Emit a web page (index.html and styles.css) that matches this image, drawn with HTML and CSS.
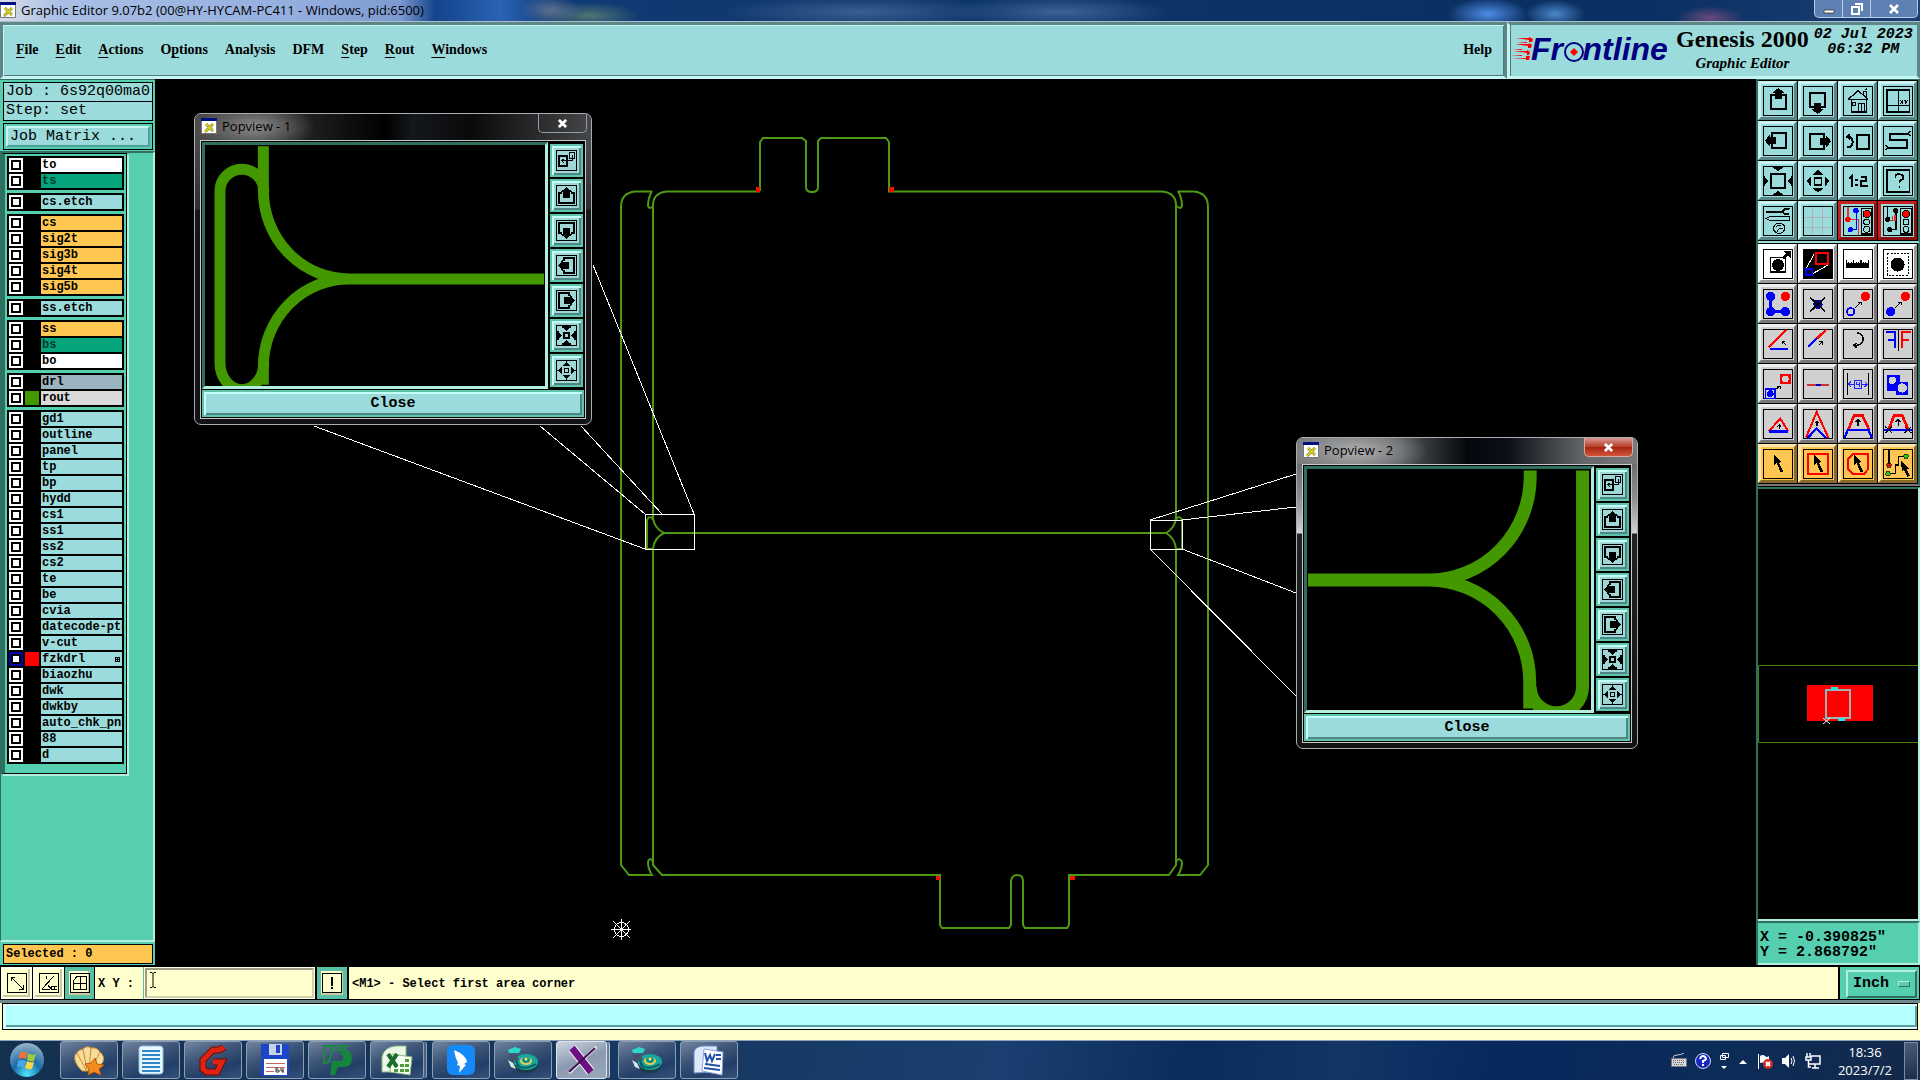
FILE: index.html
```html
<!DOCTYPE html>
<html lang="en">
<head>
<meta charset="utf-8">
<title>Graphic Editor</title>
<link rel="stylesheet" href="styles.css">
</head>
<body>
<svg class="defs" aria-hidden="true">
  <symbol id="app" viewBox="0 0 16 16"><path fill="#fff" stroke="#777" d="M.5.5h15v15H.5z"/><path fill="#001080" d="M0 0h16v3H0z"/><path stroke="#6a6a10" stroke-width="2.500" d="M5 6l7 7M12 6l-8 8"/><path stroke="#e6e020" stroke-width="1.500" d="M5 6l7 7M12 6l-8 8"/></symbol>
  <symbol id="frame" viewBox="0 0 90 90"><path fill="none" stroke="#000" stroke-width="3" d="M1.500 1.500h87v87h-87z"/></symbol>
  <symbol id="pan" viewBox="0 0 90 90"><use href="#frame"/><path fill="none" stroke="#000" stroke-width="6" d="M24 28h45v41H24z"/><path d="M46 6L64 20H56V38H36V20H28z"/></symbol>
  <symbol id="minipan" viewBox="0 0 60 60"><path fill="none" stroke="#000" stroke-width="3" d="M1.500 1.500h57v57h-57z"/><path fill="none" stroke="#000" stroke-width="6" d="M9 24h42v27H9z"/><path fill="#9ddcdc" d="M18 18h24v12H18z"/><path d="M30 6L46 19H39V36H21V19H14z"/></symbol>
  <symbol id="zoomin" viewBox="0 0 60 60"><path fill="none" stroke="#000" stroke-width="3" d="M1.500 1.500h57v57h-57z"/><path fill="none" stroke="#000" stroke-width="4" d="M23 23h14v14H23z"/><path d="M30 16L16 6V3h28v3zM30 44L16 54v3h28v-3zM16 30L6 16H3v28h3zM44 30L54 16h3v28h-3z"/></symbol>
  <symbol id="zoomout" viewBox="0 0 60 60"><path fill="none" stroke="#000" stroke-width="3" d="M1.500 1.500h57v57h-57zM24 24h12v12H24z"/><path d="M30 4L41 17H19zM30 56L41 43H19zM4 30L17 19v22zM56 30L43 19v22z"/></symbol>
  <symbol id="link" viewBox="0 0 60 60"><path fill="none" stroke="#000" stroke-width="3" d="M1.500 1.500h57v57h-57zM39 8h15v15H39zM46 15v16H17M23 25l-7 6 7 6"/><path fill="none" stroke="#000" stroke-width="5" d="M8 18h24v27H8z"/></symbol>
  <symbol id="cursor" viewBox="0 0 90 90"><path d="M33 16L57 39l-9 2 12 26-7 3-12-27-8 7z"/></symbol>
  <symbol id="snail" viewBox="0 0 34 28"><ellipse cx="20" cy="19" rx="12" ry="8" fill="#1c3b4a"/><ellipse cx="20" cy="16" rx="12" ry="8" fill="#16a79e"/><path fill="none" stroke="#0b5f60" stroke-width="2" d="M10 19q8 6 20-1M11 12q-2 5 3 9"/><ellipse cx="20" cy="15" rx="6" ry="4" fill="#e3d05a"/><ellipse cx="20" cy="14" rx="4" ry="3" fill="#0d8d84"/><circle cx="20" cy="13" r="1.500" fill="#f2e87c"/><path fill="#2fd6cb" d="M2 4l7-3 6 2-2 4H3z"/><path fill="#46506a" d="M3 8l8 1 2 5-6 1z"/><path fill="#dce6e6" d="M2 14l5 3 3 6-5-2z"/></symbol>
</svg>

<header class="titlebar">
  <svg class="app-icon"><use href="#app"/></svg>
  <span>Graphic Editor 9.07b2 (00@HY-HYCAM-PC411 - Windows, pid:6500)</span>
  <div class="winbtns">
    <button aria-label="Minimize"><svg viewBox="0 0 14 12"><path fill="#fff" stroke="#333" stroke-width=".8" d="M2 7h10v3H2z"/></svg></button>
    <button aria-label="Restore"><svg viewBox="0 0 14 12"><path fill="none" stroke="#fff" stroke-width="2" d="M5 1h7v7M2 4h7v7H2z"/></svg></button>
    <button class="wide" aria-label="Close"><svg viewBox="0 0 14 12"><path fill="none" stroke="#fff" stroke-width="2.500" d="M3 2l8 8M11 2l-8 8"/></svg></button>
  </div>
</header>

<div class="topbar">
  <nav class="menus">
    <button><u>F</u>ile</button><button><u>E</u>dit</button><button><u>A</u>ctions</button><button>O<u>p</u>tions</button><button>Analysis</button><button>DFM</button><button><u>S</u>tep</button><button><u>R</u>out</button><button><u>W</u>indows</button><button class="help">Help</button>
  </nav>
  <div class="brand">
    <svg class="logo" viewBox="0 -6 162 44"><path fill="#f00" d="M5 4h13V3l4 2-1 3h-3V6zM4 10h14V9l3 2-1 3h-3v-2zM3 17h13v-1l3 2-1 3h-2v-2zM1 24h14v-2h4l-1 4h-3v-1zM1 15h10v1zM0 21h11v1zM6 8h10v1z"/><text class="logo-text" x="20" y="26">Fr<tspan fill="none">o</tspan>ntline</text><circle cx="63" cy="18" r="9" fill="none" stroke="#000080" stroke-width="2"/><path fill="#f00" d="M63 14l4 4-4 4-4-4z"/></svg>
    <div class="product"><strong>Genesis 2000</strong><em>Graphic Editor</em></div>
    <div class="date"><span>02 Jul 2023</span><span>06:32 PM</span></div>
  </div>
</div>

<main class="work">
  <aside class="left">
    <div class="jobinfo"><div>Job : 6s92q00ma0</div><div>Step: set</div></div>
    <div class="matrix"><button>Job Matrix ...</button></div>
    <div class="layers-wrap">
      <div class="layers">
        <div class="group">
          <label class="row white"><input type="checkbox"><i></i><span>to</span></label>
          <label class="row mask"><input type="checkbox"><i></i><span>ts</span></label>
        </div>
        <div class="group"><label class="row"><input type="checkbox"><i></i><span>cs.etch</span></label></div>
        <div class="group">
          <label class="row signal"><input type="checkbox"><i></i><span>cs</span></label>
          <label class="row signal"><input type="checkbox"><i></i><span>sig2t</span></label>
          <label class="row signal"><input type="checkbox"><i></i><span>sig3b</span></label>
          <label class="row signal"><input type="checkbox"><i></i><span>sig4t</span></label>
          <label class="row signal"><input type="checkbox"><i></i><span>sig5b</span></label>
        </div>
        <div class="group"><label class="row"><input type="checkbox"><i></i><span>ss.etch</span></label></div>
        <div class="group">
          <label class="row signal"><input type="checkbox"><i></i><span>ss</span></label>
          <label class="row mask"><input type="checkbox"><i></i><span>bs</span></label>
          <label class="row white"><input type="checkbox"><i></i><span>bo</span></label>
        </div>
        <div class="group">
          <label class="row drill"><input type="checkbox"><i></i><span>drl</span></label>
          <label class="row rout"><input type="checkbox"><i class="green"></i><span>rout</span></label>
        </div>
        <div class="group">
          <label class="row"><input type="checkbox"><i></i><span>gd1</span></label>
          <label class="row"><input type="checkbox"><i></i><span>outline</span></label>
          <label class="row"><input type="checkbox"><i></i><span>panel</span></label>
          <label class="row"><input type="checkbox"><i></i><span>tp</span></label>
          <label class="row"><input type="checkbox"><i></i><span>bp</span></label>
          <label class="row"><input type="checkbox"><i></i><span>hydd</span></label>
          <label class="row"><input type="checkbox"><i></i><span>cs1</span></label>
          <label class="row"><input type="checkbox"><i></i><span>ss1</span></label>
          <label class="row"><input type="checkbox"><i></i><span>ss2</span></label>
          <label class="row"><input type="checkbox"><i></i><span>cs2</span></label>
          <label class="row"><input type="checkbox"><i></i><span>te</span></label>
          <label class="row"><input type="checkbox"><i></i><span>be</span></label>
          <label class="row"><input type="checkbox"><i></i><span>cvia</span></label>
          <label class="row"><input type="checkbox"><i></i><span>datecode-pte</span></label>
          <label class="row"><input type="checkbox"><i></i><span>v-cut</span></label>
          <label class="row"><input type="checkbox" checked><i class="red"></i><span>fzkdrl</span><svg class="mark" viewBox="0 0 5 5"><path fill="none" stroke="#000" d="M.5.5h4v4h-4zM2.500 0v5M0 2.500h5"/></svg></label>
          <label class="row"><input type="checkbox"><i></i><span>biaozhu</span></label>
          <label class="row"><input type="checkbox"><i></i><span>dwk</span></label>
          <label class="row"><input type="checkbox"><i></i><span>dwkby</span></label>
          <label class="row"><input type="checkbox"><i></i><span>auto_chk_pnl</span></label>
          <label class="row"><input type="checkbox"><i></i><span>88</span></label>
          <label class="row"><input type="checkbox"><i></i><span>d</span></label>
        </div>
      </div>
    </div>
    <div class="selected"><div>Selected : 0</div></div>
  </aside>

  <section class="canvas">
    <svg class="board" width="1601" height="888" viewBox="155 79 1601 888">
      <g fill="none" stroke="#4f9a14" stroke-width="2">
        <path d="M652 191.500H635Q621 193 621 207V865L629 875H652Q648 869 648 862Q650 856 653 862"/>
        <path d="M652 191Q648 198 648 206Q650 210 653 206"/>
        <path d="M1178 191.500H1194Q1208 193 1208 207V865L1200 875H1178Q1182 869 1182 862Q1179 856 1176 862"/>
        <path d="M1178 191Q1182 198 1182 206Q1180 210 1177 206"/>
        <path d="M760 191.500H667Q653 193 653 205V518Q654 528 664 533Q654 538 653 549V865L662 875H940V925L942 928H1009L1011 925V881Q1012 875 1017 875Q1023 875 1023 881V925L1025 928H1067L1069 925V875H1169L1176 865V549Q1175 538 1166 533Q1175 528 1176 518V205Q1176 193 1162 191.500H889V142L886 138H821L818 141V187Q818 192 812 192Q806 192 806 187V141L802 138H763L760 142V191"/>
        <path d="M662 533H1168"/>
        <path d="M653 520Q650 514 647 520V549H653M1176 520Q1179 514 1182 520V549H1176"/>
      </g>
      <path fill="#f21200" d="M756 187h4v5h-4zM889 187h5v5h-5zM936 876h4v4h-4zM1070 876h5v4h-5z"/>
      <g class="crisp" fill="none" stroke="#fff">
        <path d="M645.500 514.500h49v35h-49zM1150.500 520.500h32v29h-32z"/>
        <path d="M593 265L694 514M540 426L645 514M581 426L662 514M314 426L645 549M1150 520L1296 474M1182 520L1296 507M1182 549L1296 593M1150 549L1296 696"/>
        <path d="M611 929.500h20M621.500 919v21M613 921l17 17M630 921l-17 17"/><circle cx="621.500" cy="929.500" r="7"/>
      </g>
    </svg>

    <section class="pop pop1">
      <header><svg class="app-icon"><use href="#app"/></svg><span>Popview - 1</span><button class="popx" aria-label="Close window"><svg viewBox="0 0 10 10"><path stroke="#fff" stroke-width="3" d="M1 1l8 8M9 1l-8 8"/></svg></button></header>
      <div class="client">
        <div class="view"><svg width="341" height="241" viewBox="204 145 341 241"><path fill="none" stroke="#439800" stroke-width="11" d="M262.500 146V190A86 89 0 0 0 350 279H544M350 279A86 88 0 0 0 262.500 367V385M219 363V191A22 22 0 0 1 263 191M219 363A22 27 0 0 0 263 363"/></svg></div>
        <div class="poptools">
          <button aria-label="Link"><svg><use href="#link"/></svg></button><button aria-label="Pan up"><svg><use href="#minipan"/></svg></button><button aria-label="Pan down"><svg class="r180"><use href="#minipan"/></svg></button><button aria-label="Pan left"><svg class="r270"><use href="#minipan"/></svg></button><button aria-label="Pan right"><svg class="r90"><use href="#minipan"/></svg></button><button aria-label="Zoom in"><svg><use href="#zoomin"/></svg></button><button aria-label="Zoom out"><svg><use href="#zoomout"/></svg></button>
        </div>
        <div class="popclose"><button>Close</button></div>
      </div>
    </section>

    <section class="pop pop2">
      <header><svg class="app-icon"><use href="#app"/></svg><span>Popview - 2</span><button class="popx" aria-label="Close window"><svg viewBox="0 0 10 10"><path stroke="#fff" stroke-width="3" d="M1 1l8 8M9 1l-8 8"/></svg></button></header>
      <div class="client">
        <div class="view"><svg width="285" height="241" viewBox="1306 469 285 241"><path fill="none" stroke="#439800" stroke-width="13" d="M1307 580H1428A102 104 0 0 0 1530 476V470M1428 580A102 102 0 0 1 1529.500 682V709M1582.500 470V687A26 26 0 0 1 1530 687"/></svg></div>
        <div class="poptools">
          <button aria-label="Link"><svg><use href="#link"/></svg></button><button aria-label="Pan up"><svg><use href="#minipan"/></svg></button><button aria-label="Pan down"><svg class="r180"><use href="#minipan"/></svg></button><button aria-label="Pan left"><svg class="r270"><use href="#minipan"/></svg></button><button aria-label="Pan right"><svg class="r90"><use href="#minipan"/></svg></button><button aria-label="Zoom in"><svg><use href="#zoomin"/></svg></button><button aria-label="Zoom out"><svg><use href="#zoomout"/></svg></button>
        </div>
        <div class="popclose"><button>Close</button></div>
      </div>
    </section>
  </section>

  <aside class="right">
    <div class="tools">
      <button aria-label="Pan up"><svg><use href="#pan"/></svg></button>
      <button aria-label="Pan down"><svg class="r180"><use href="#pan"/></svg></button>
      <button aria-label="Home"><svg viewBox="0 0 90 90"><use href="#frame"/><g fill="none" stroke="#000" stroke-width="4"><path d="M16 40L45 14L76 40M25 38v40h46V38M19 40h55"/><path stroke-width="3" d="M29 50h9v9h-9zM47 78V51h17v27M56 51v27M62 28V15h8v18M72 8l-5 5"/></g></svg></button>
      <button aria-label="Coordinates"><svg viewBox="0 0 90 90"><use href="#frame"/><path fill="none" stroke="#000" stroke-width="5" d="M11 11h68v67H11z"/><path fill="none" stroke="#000" stroke-width="3" d="M47 11v67M11 59h68M52 43l8 10M60 43l-8 10M65 43l5 5M74 43l-8 10"/></svg></button>
      <button aria-label="Pan left"><svg class="r270"><use href="#pan"/></svg></button>
      <button aria-label="Pan right"><svg class="r90"><use href="#pan"/></svg></button>
      <button aria-label="Previous view"><svg viewBox="0 0 90 90"><use href="#frame"/><g fill="none" stroke="#000" stroke-width="6"><path d="M43 28h34v40H43zM13 63h8q8-4 8-15t-9-15"/></g><path d="M7 32l15-11v22z"/></svg></button>
      <button aria-label="Serpentine"><svg viewBox="0 0 90 90"><use href="#frame"/><path fill="none" stroke="#000" stroke-width="5" d="M76 23H20v19h52v23H15"/><path fill="none" stroke="#000" stroke-width="3" d="M83 15l-8 8 8 8M7 57l8 8-8 8"/></svg></button>
      <button aria-label="Zoom in"><svg viewBox="0 0 90 90"><use href="#frame"/><path fill="none" stroke="#000" stroke-width="5" d="M24 24h42v42H24z"/><path d="M28 3h34L45 15zM28 87h34L45 75zM3 29v32l12-16zM87 29v32L75 45z"/></svg></button>
      <button aria-label="Zoom out"><svg viewBox="0 0 90 90"><use href="#frame"/><path fill="none" stroke="#000" stroke-width="5" d="M34 35h21v22H34z"/><path d="M45 12l17 14H28zM45 80l17-14H28zM11 46l14-16v32zM79 46L65 30v32z"/></svg></button>
      <button aria-label="Zoom one to two"><svg viewBox="0 0 90 90"><use href="#frame"/><path fill="none" stroke="#000" stroke-width="6" d="M18 38l9-8v34M53 32h17v14H55v15h19"/><path d="M37 38h7v7h-7zM37 54h7v7h-7z"/></svg></button>
      <button aria-label="Query"><svg viewBox="0 0 90 90"><use href="#frame"/><path fill="none" stroke="#000" stroke-width="5" d="M11 11h68v67H11zM37 35v-7q10-8 23 1v10q-11 4-11 13M49 60v7"/></svg></button>
      <button aria-label="Settings"><svg viewBox="0 0 90 90"><use href="#frame"/><path fill="none" stroke="#000" stroke-width="6" d="M10 17h50M79 10q-17-4-19 7 2 12 19 7"/><path fill="none" stroke="#000" stroke-width="3" d="M9 37l10-5h60v10H19zM35 76q-8-7 0-18t26-2q9 8 0 21-14 11-26-1zM40 63q8-10 13-3M44 78q0-12 16-10"/></svg></button>
      <button aria-label="Grid"><svg viewBox="0 0 90 90"><use href="#frame"/><path fill="none" stroke="#b9a0a6" stroke-width="2" d="M28 3v84M59 3v84M3 33h84M3 63h84"/></svg></button>
      <button class="alert" aria-label="Online check"><svg viewBox="0 0 90 90"><path fill="none" stroke="#000" stroke-width="4" d="M2 2v86h86V2zM56 8h30v76H56z"/><g fill="none" stroke-width="4"><path stroke="#d33" d="M15 2v38h32v46"/><path stroke="#00f" d="M40 15v55H22"/></g><g fill="#00f"><circle cx="39" cy="14" r="8"/><circle cx="22" cy="71" r="8"/></g><circle cx="15" cy="40" r="8" fill="red"/><g fill="none" stroke="#000" stroke-width="3"><circle cx="71" cy="24" r="11" fill="#f00"/><circle cx="71" cy="48" r="9"/><circle cx="71" cy="70" r="9"/></g></svg></button>
      <button class="alert" aria-label="Net check"><svg viewBox="0 0 90 90"><path fill="none" stroke="#000" stroke-width="4" d="M2 2v86h86V2zM52 8h34v76H52zM14 2v38M39 15v55H19"/><path stroke="#d33" stroke-width="4" fill="none" d="M19 44h17V28M28 42V30M20 42V32"/><g><circle cx="38" cy="14" r="8"/><circle cx="14" cy="40" r="8"/><circle cx="20" cy="71" r="8"/></g><g fill="none" stroke="#000" stroke-width="3"><circle cx="69" cy="24" r="11" fill="#f00"/><circle cx="69" cy="48" r="9"/><circle cx="69" cy="70" r="9"/></g></svg></button>
    </div>
    <div class="tools edit">
      <button class="plain" aria-label="Move feature"><svg viewBox="0 0 90 90"><use href="#frame"/><path fill="none" stroke="#000" stroke-width="4" d="M23 25h44v44H23z"/><circle cx="45" cy="48" r="18"/><path stroke="#000" stroke-width="9" d="M60 28l14-12"/><path d="M61 6h23v23z"/></svg></button>
      <button class="plain" aria-label="Zoom feature"><svg viewBox="0 0 90 90"><path d="M0 0h90v90H0z"/><path fill="none" stroke="#fff" stroke-width="3" d="M10 57L33 16M29 74l50-28"/><path fill="none" stroke="red" stroke-width="6" d="M40 12h36v34H40z"/><path fill="none" stroke="#00f" stroke-width="6" d="M9 60h19v18H9z"/></svg></button>
      <button class="plain" aria-label="Ruler"><svg viewBox="0 0 90 90"><use href="#frame"/><path d="M8 56V33h4v9h4v-3h3v3h4v-3h3v3h4v-9h4v9h4v-3h3v3h4v-3h3v3h4v-9h4v9h4v-3h3v3h4v-3h3v3h4v-9h4v23z"/></svg></button>
      <button class="plain" aria-label="Select feature"><svg viewBox="0 0 90 90"><use href="#frame"/><path fill="none" stroke="#000" stroke-width="3" stroke-dasharray="6 4" d="M13 13h63v65H13z"/><circle cx="44" cy="47" r="21"/></svg></button>
      <button aria-label="Connect"><svg viewBox="0 0 90 90"><use href="#frame"/><path fill="none" stroke="#00f" stroke-width="8" d="M23 22v46h44"/><g fill="#00f"><circle cx="23" cy="22" r="14"/><circle cx="23" cy="68" r="14"/><circle cx="67" cy="68" r="14"/></g><circle cx="67" cy="22" r="14" fill="red"/></svg></button>
      <button aria-label="Delete"><svg viewBox="0 0 90 90"><use href="#frame"/><circle cx="45" cy="46" r="14" fill="#000090"/><path stroke="#000" stroke-width="5" d="M21 25l46 43M67 25L21 68"/></svg></button>
      <button aria-label="Move"><svg viewBox="0 0 90 90"><use href="#frame"/><circle cx="67" cy="22" r="14" fill="red"/><circle cx="23" cy="68" r="11" fill="none" stroke="#00f" stroke-width="5"/><path fill="none" stroke="#000" stroke-width="3" d="M37 56l17-17M44 39h10v10"/></svg></button>
      <button aria-label="Copy"><svg viewBox="0 0 90 90"><use href="#frame"/><circle cx="67" cy="22" r="14" fill="red"/><circle cx="23" cy="68" r="14" fill="#00f"/><path fill="none" stroke="#000" stroke-width="3" d="M37 56l17-17M44 39h10v10"/></svg></button>
      <button aria-label="Rotate line"><svg viewBox="0 0 90 90"><use href="#frame"/><path stroke="red" stroke-width="7" d="M17 54l53-51"/><path stroke="#00f" stroke-width="7" d="M20 60h56"/><path fill="none" stroke="#000" stroke-width="3" d="M68 47L58 36M57 45v-9h9"/></svg></button>
      <button aria-label="Extend line"><svg viewBox="0 0 90 90"><use href="#frame"/><path stroke="red" stroke-width="7" d="M42 28L69 3"/><path stroke="#00f" stroke-width="7" d="M15 53l27-25"/><path fill="none" stroke="#000" stroke-width="3" d="M47 49l10-10M49 38h9v9"/></svg></button>
      <button aria-label="Rotate"><svg viewBox="0 0 90 90"><use href="#frame"/><path fill="none" stroke="#000" stroke-width="5" d="M42 11q18 3 18 19T42 49h-9M41 42l-9 7 9 7"/></svg></button>
      <button aria-label="Mirror"><svg viewBox="0 0 90 90"><use href="#frame"/><path stroke="#000" stroke-width="3" d="M46 0v66"/><path fill="none" stroke="#00f" stroke-width="6" d="M9 8h28v48M37 32H14"/><path fill="none" stroke="red" stroke-width="6" d="M83 8H56v48M56 32h22"/></svg></button>
      <button aria-label="Move to layer"><svg viewBox="0 0 90 90"><use href="#frame"/><path fill="none" stroke="#00f" stroke-width="4" d="M8 60h28v28H8z"/><circle cx="22" cy="74" r="10" fill="#00f"/><path fill="red" d="M51 14h32v32H51z"/><circle cx="67" cy="30" r="10" fill="#d0d0d0"/><path fill="none" stroke="#000" stroke-width="3" d="M41 60l9-9M43 51h8v8"/></svg></button>
      <button aria-label="Stretch"><svg viewBox="0 0 90 90"><use href="#frame"/><path stroke="#c33" stroke-width="8" stroke-linecap="round" d="M16 48h58"/><path stroke="#00c" stroke-width="6" d="M38 48h16"/></svg></button>
      <button aria-label="Spacing"><svg viewBox="0 0 90 90"><use href="#frame"/><path stroke="#000" stroke-width="3" d="M13 13v66M76 13v66"/><path fill="none" stroke="#22f" stroke-width="3" d="M33 34h22v24H33zM39 39v8h9M48 39v15M16 46h17M24 38l-8 8 8 8M55 46h18M65 38l8 8-8 8"/></svg></button>
      <button aria-label="Merge"><svg viewBox="0 0 90 90"><use href="#frame"/><path fill="#00f" d="M12 18h40v20h24v40H38V66H12z"/><circle cx="28" cy="34" r="11" fill="#d0d0d0"/><circle cx="58" cy="57" r="14" fill="#d0d0d0"/></svg></button>
      <button aria-label="Triangle edge"><svg viewBox="0 0 90 90"><use href="#frame"/><path fill="none" stroke="red" stroke-width="6" d="M17 67l35-38 24 38"/><path stroke="#00f" stroke-width="8" d="M17 67h58"/><path fill="none" stroke="#000" stroke-width="3" d="M49 60V48M43 53l6-6 6 6"/></svg></button>
      <button aria-label="Peak edge"><svg viewBox="0 0 90 90"><use href="#frame"/><path fill="none" stroke="red" stroke-width="6" d="M9 86L41 9l35 77"/><path fill="none" stroke="#00f" stroke-width="7" d="M14 87l27-29 28 29"/><path fill="none" stroke="#000" stroke-width="4" d="M42 50V36M35 43l7-7 7 7"/></svg></button>
      <button aria-label="Trapeze edge"><svg viewBox="0 0 90 90"><use href="#frame"/><path fill="none" stroke="red" stroke-width="8" d="M17 60l16-40h26l18 40"/><path fill="none" stroke="#00f" stroke-width="7" d="M4 87l11-25h61l11 25"/><path fill="none" stroke="#000" stroke-width="4" d="M45 50V33M38 39l7-7 7 7"/></svg></button>
      <button aria-label="Trim edge"><svg viewBox="0 0 90 90"><use href="#frame"/><path fill="none" stroke="red" stroke-width="8" d="M18 60l15-40h25l17 40"/><path stroke="#00f" stroke-width="7" d="M2 62h86"/><path fill="none" stroke="#000" stroke-width="3" d="M7 53l20 19M27 53L7 72M65 53l20 19M85 53L65 72M45 50V33M38 39l7-7 7 7"/></svg></button>
      <button class="pick" aria-label="Select"><svg viewBox="0 0 90 90"><use href="#frame"/><use href="#cursor"/></svg></button>
      <button class="pick" aria-label="Select in frame"><svg viewBox="0 0 90 90"><use href="#frame"/><path fill="none" stroke="red" stroke-width="6" d="M14 14h62v62H14z"/><use href="#cursor"/></svg></button>
      <button class="pick" aria-label="Select in polygon"><svg viewBox="0 0 90 90"><use href="#frame"/><path fill="none" stroke="red" stroke-width="6" d="M30 14h46v46L62 76H30L14 60V30z"/><use href="#cursor"/></svg></button>
      <button class="pick" aria-label="Select net"><svg viewBox="0 0 90 90"><use href="#frame"/><path fill="none" stroke="#000" stroke-width="4" d="M18 2v46M16 74h21V48h9V23h23"/><circle cx="18" cy="49" r="7" fill="#d01818" stroke="#000" stroke-width="2"/><circle cx="69" cy="22" r="7" fill="#2c2" stroke="#000" stroke-width="2"/><circle cx="15" cy="74" r="7" fill="#2c2" stroke="#000" stroke-width="2"/><path d="M55 36l24 22-9 2 10 20-7 3-10-21-7 7z"/></svg></button>
    </div>
    <div class="overview">
      <svg width="160" height="80" viewBox="0 0 160 80"><path fill="none" stroke="#3f8012" d="M.5 1.500h162v77H.5z"/><path fill="red" d="M49 21h66v36H49z"/><path fill="none" stroke="#a6b0b0" stroke-width="2" d="M68 26h24v28H68z"/><path stroke="#22e4ea" stroke-width="3" d="M73 24.500h7M80 55.500h7"/><path stroke="#22e4ea" stroke-width="2" d="M68 26v3M68 52v3"/><path stroke="#fff" d="M65 54l7 6M72 54l-7 6"/></svg>
    </div>
    <div class="coords"><span>X = -0.390825"</span><span>Y = 2.868792"</span></div>
  </aside>
</main>

<footer class="status">
  <button class="mode" aria-label="Absolute"><svg viewBox="0 0 20 20"><path fill="none" stroke="#000" d="M.5.5h19v19H.5zM4 4l12 12M4 8V4h4M16 12v4h-4"/></svg></button>
  <button class="mode" aria-label="Angle"><svg viewBox="0 0 20 20"><path fill="none" stroke="#000" d="M.5.5h19v19H.5zM3 16L15 3M3 16h8M7 3v3M9 12l3 4M12 13h3v3h-3zM16 13h2M16 16h2"/></svg></button>
  <button class="mode on" aria-label="Snap grid"><svg viewBox="0 0 20 20"><path fill="none" stroke="#000" d="M.5.5h19v19H.5zM7 3.500h9.500v13H3.500v-9zM10.500 3v14M3 10.500h14"/></svg></button>
  <label class="xy" for="xy">X Y :</label>
  <div class="xyfield"><input id="xy" type="text"><svg class="caret" viewBox="0 0 6 16"><path fill="none" stroke="#000" d="M0 .5h2l1 1 1-1h2M3 1v14M0 15.500h2l1-1 1 1h2"/></svg></div>
  <button class="mode on bang" aria-label="Apply"><svg viewBox="0 0 20 20"><path fill="none" stroke="#000" d="M.5.5h19v19H.5z"/><path d="M9 4h2v9H9zM9 14h2v2H9z"/></svg></button>
  <div class="message">&lt;M1&gt; - Select first area corner</div>
  <div class="unit"><select aria-label="Units"><option>Inch</option></select><i></i></div>
</footer>
<div class="strip"><div></div></div>

<div class="taskbar">
  <button class="start" aria-label="Start"><svg viewBox="0 0 38 38"><defs><radialGradient id="orb" cx=".5" cy=".9" r=".9"><stop offset="0" stop-color="#4fe6ff"/><stop offset=".45" stop-color="#1b6ca8"/><stop offset="1" stop-color="#9db6c8"/></radialGradient></defs><circle cx="19" cy="19" r="17.500" fill="url(#orb)" stroke="#0c2c50"/><path fill="#f0703a" d="M12 12q4-3 7 0l-1 6q-4-2-8 0z"/><path fill="#9ccb3c" d="M20 12q4 3 8 1l-2 7q-4 1-7-1z"/><path fill="#4aa8e8" d="M10 20q4-2 8 0l-2 7q-4-3-7-1z"/><path fill="#fbd24a" d="M19 20q3 2 7 1l-2 7q-4 1-7-1z"/></svg></button>
  <button aria-label="Shell"><svg viewBox="0 0 34 32"><path fill="#f7dc9a" stroke="#c98a35" d="M3 11Q7 5 11 5q4-4 8-1 6-1 9 4 5 4 3 10l-8 9H10Q1 18 3 11z"/><path fill="none" stroke="#c98a35" d="M14 26L5 9M15 26L11 5M17 26l2-22M19 26l9-18"/><path fill="#f58a1f" stroke="#b85a0c" d="M23 14l2 6 7 1-5 4 2 6-7-3-6 3 1-6-4-5 6-1z"/></svg></button>
  <button aria-label="Notes"><svg viewBox="0 0 34 32"><rect x="5" y="2" width="24" height="28" rx="3" fill="#e8f6ff" stroke="#8fc1e2"/><path stroke="#2e86c4" stroke-width="2" d="M8 7h18M8 11h18M8 15h18M8 19h18M8 23h18M8 27h18"/></svg></button>
  <button aria-label="CAM"><svg viewBox="0 0 34 32"><path fill="none" stroke="#6a0d06" stroke-width="7" d="M28 3Q24 7 17 6L7 16v9l4 3h10l5-10h-9"/><path fill="none" stroke="#dd2414" stroke-width="5" d="M28 3Q24 7 17 6L7 16v9l4 3h10l5-10h-9"/></svg></button>
  <button aria-label="Disk tool"><svg viewBox="0 0 34 32"><path fill="#1d45c8" d="M3 0h27l1 2v30H3z"/><path fill="#c9d3e6" d="M11 0h13v11H11z"/><path fill="#1d45c8" d="M18 1h4v8h-4z"/><path fill="#fff" d="M6 15h23v16H6z"/><path stroke="#c86464" d="M8 19.500h19M8 23.500h19M8 27.500h8"/><path fill="none" stroke="#333" d="M20 24h-2v4h3v-2h-3M23 24v3h3M25 24v5"/></svg></button>
  <button aria-label="Plotter"><svg viewBox="0 0 34 32"><path fill="none" stroke="#1a8a42" stroke-width="2" d="M4 19V2h23l-3 4H12L9 18z"/><path fill="#14853c" d="M10 31l2-14h8q3 0 3-4t-4-4l3-3h5q5 2 5 8 0 9-9 9h-5l-3 8z"/></svg></button>
  <button class="stack" aria-label="Excel"><svg viewBox="0 0 34 32"><path fill="#eef6ea" stroke="#86b97a" d="M2 13Q4 3 16 2h10v26H2z"/><path fill="#f8fff5" stroke="#86b97a" d="M12 10l20 3-2 18-20-3z"/><path fill="#4f9b3f" d="M20 20h4v3h-4zM25 20h4v3h-4zM20 25h4v3h-4zM25 25h4v3h-4zM14 25h4v3h-4zM25 15h4v3h-4z"/><path stroke="#1c6b2a" stroke-width="4" d="M8 10l9 13M17 10L8 23"/></svg></button>
  <button aria-label="Messenger"><svg viewBox="0 0 34 32"><rect x="3" y="1" width="28" height="30" rx="6" fill="#1489f7"/><path fill="#fff" d="M10 6q12 5 13 12l-3 2 2 1-7 8 1-7-3-1 1-2q-3-6-4-13z"/></svg></button>
  <button aria-label="Job manager"><svg viewBox="0 0 34 28"><use href="#snail"/></svg></button>
  <button class="active" aria-label="X server"><svg viewBox="0 0 34 32"><path stroke="#fff" stroke-width="9" d="M7 4l19 24"/><path stroke="#fff" stroke-width="3" d="M31 3L4 29"/><path stroke="#6b1180" stroke-width="7" d="M7 4l19 24"/><path stroke="#3a1050" stroke-width="2" d="M30 4L4 28"/></svg></button>
  <button aria-label="Job manager 2"><svg viewBox="0 0 34 28"><use href="#snail"/></svg></button>
  <button aria-label="Word"><svg viewBox="0 0 34 32"><path fill="#dce8f8" stroke="#6a8cc8" d="M2 29V8Q3 3 10 2h15v26z"/><path fill="#fff" stroke="#8aa6d6" d="M12 5l19 3-1 23-20-4z"/><path fill="none" stroke="#2450a8" stroke-width="2" d="M13 9l2 8 3-6 2 6 3-7M24 11h5M24 15h5M13 20l15 2M12 24l16 2"/></svg></button>

  <div class="tray">
    <svg width="18" height="16" viewBox="0 0 18 16"><path fill="none" stroke="#ccc" d="M3 5q0-3 4-3t7-2"/><path fill="#d8d8d8" stroke="#777" d="M1.500 5.500h15v8h-15z"/><path stroke="#666" stroke-dasharray="1 1" d="M3 7.500h12M3 9.500h12M4 11.500h10"/></svg>
    <svg width="18" height="18" viewBox="0 0 18 18"><circle cx="9" cy="9" r="7.500" fill="#1728c0" stroke="#cfd6f6"/><path fill="none" stroke="#fff" stroke-width="2" d="M6 7q1-3 3-3t3 2.500Q12 8 9 9v2M9 12v2"/></svg>
    <svg width="12" height="20" viewBox="0 0 12 20"><path fill="none" stroke="#fff" d="M4.500 2.500h6v4h-6zM2.500 4.500h5v4h-5z"/><path fill="#fff" d="M3 15h6l-3 3z"/></svg>
    <svg width="14" height="16" viewBox="0 0 14 16"><path fill="#fff" d="M3 11h8L7 7z"/></svg>
    <svg width="18" height="18" viewBox="0 0 18 18"><path fill="#fff" d="M2 2h1v15H2zM4 4q3-2 5 0t4 0v7q-3 1-5 0t-4 0z"/><circle cx="12" cy="12" r="5" fill="#d02a24"/><path stroke="#fff" stroke-width="2" d="M10 10l4 4M14 10l-4 4"/></svg>
    <svg width="18" height="18" viewBox="0 0 18 18"><path fill="#fff" d="M2 6h3l4-4v14l-4-4H2z"/><path fill="none" stroke="#fff" d="M11 6q2 3 0 6M13 4q3 5 0 10"/></svg>
    <svg width="18" height="18" viewBox="0 0 18 18"><path fill="none" stroke="#fff" stroke-width="1.500" d="M7 4h9v8H5M8 16h7M11 12v4M3 1v4M6 1v4M2 5h5v3H2zM4.500 8v7H7"/></svg>
    <div class="clock"><span>18:36</span><span>2023/7/2</span></div>
    <button class="desktop" aria-label="Show desktop"></button>
  </div>
</div>
</body>
</html>
```

FILE: styles.css
```css
:root {
  --teal: #9cdbdb;
  --teal-hi: #c6f4f2;
  --teal-lo: #507b7b;
  --green: #55cfb0;
  --green-hi: #b4eedf;
  --green-lo: #2f6f60;
  --cream: #ffffcd;
  --orange: #ffc751;
  --mono: "Liberation Mono", "Courier New", monospace;
  --serif: "Liberation Serif", "Times New Roman", serif;
  --sans: "Open Sans", "Noto Sans", sans-serif;
}
* { box-sizing: border-box; }
body {
  margin: 0;
  min-height: 100vh;
  display: flex;
  flex-direction: column;
  background: #000;
  color: #000;
  font-family: var(--mono);
  overflow: hidden;
}
button, input, select { font: inherit; color: inherit; margin: 0; padding: 0; border: 0; background: none; border-radius: 0; }
svg { display: block; }
.defs { display: none; }
.crisp, .tools svg, .poptools svg, .mode svg, .mark { shape-rendering: crispEdges; }
.r90 { transform: rotate(90deg); }
.r180 { transform: rotate(180deg); }
.r270 { transform: rotate(270deg); }
.app-icon { width: 16px; height: 16px; flex: none; }

.titlebar {
  height: 22px;
  flex: none;
  display: flex;
  align-items: center;
  gap: 5px;
  padding-bottom: 2px;
  border-bottom: 1px solid #aebdcc;
  font: 13px/20px var(--sans);
  background:
    radial-gradient(ellipse 30px 14px at 551px 10px, #5c6f8e, transparent),
    radial-gradient(ellipse 50px 14px at 590px 16px, #4f7472, transparent),
    radial-gradient(ellipse 140px 16px at 860px 12px, #3b5f90, transparent),
    radial-gradient(ellipse 110px 16px at 1060px 12px, #3d6395, transparent),
    radial-gradient(ellipse 40px 16px at 1488px 14px, #4e8be4, transparent),
    radial-gradient(ellipse 30px 14px at 1555px 14px, #4a86c8, transparent),
    radial-gradient(ellipse 34px 12px at 1710px 18px, #6a4a7a, transparent),
    linear-gradient(90deg, #d9dde6 0, #a9bfe6 60px, #93aede 300px, #7d9ad0 400px, #14438a 435px, #2a62b4 500px, #103a74 560px, #0c3568 1000px, #0a2f62 1640px, #1b3f74 100%);
}
.winbtns { display: flex; align-self: flex-start; margin-left: auto; margin-right: 2px; height: 18px; border: 1px solid #bccbe4; border-top: 0; border-radius: 0 0 5px 5px; background: #5f80b2; }
.winbtns button { width: 28px; display: flex; align-items: center; justify-content: center; border-right: 1px solid #bccbe4; }
.winbtns .wide { width: 46px; border: 0; }
.winbtns svg { width: 14px; height: 12px; }

.topbar { flex: none; height: 57px; display: flex; background: var(--teal); }
.menus, .brand { border: 3px solid; border-color: #5d8787 #5d8787 #c6f4f2 #5d8787; }
.menus {
  flex: 1;
  display: flex;
  align-items: center;
  gap: 17px;
  padding: 0 12px 2px 13px;
  box-shadow: inset 1px 1px var(--teal-hi), inset -1px -1px var(--teal-lo);
  font: bold 14px/20px var(--serif);
}
.menus u { text-underline-offset: 3px; }
.menus .help { margin-left: auto; }
.brand { width: 413px; display: flex; align-items: flex-start; padding: 0 2px 0 1px; gap: 3px; border-left-color: #c6f4f2; box-shadow: inset 1px 0 var(--teal-lo); }
.logo { width: 162px; height: 44px; margin-top: 3px; }
.logo-text { font: italic bold 32px "Liberation Sans", Arial, sans-serif; fill: #000080; }
.product { display: flex; flex-direction: column; align-items: center; white-space: nowrap; }
.product strong { font: bold 24px/28px var(--serif); }
.product em { font: italic bold 15px/20px var(--serif); }
.date { flex: 1; display: flex; flex-direction: column; align-items: center; padding-top: 2px; font: italic bold 15px/15px var(--mono); white-space: nowrap; }

.work { flex: 1; display: flex; min-height: 0; }
.left { width: 155px; display: flex; flex-direction: column; margin-bottom: 2px; background: var(--green); border-top: 1px solid var(--green-lo); }
.jobinfo { margin: 2px 2px 2px 3px; border: 1px solid #000; background: var(--teal); font-size: 15px; line-height: 18px; }
.jobinfo div { padding-left: 2px; white-space: nowrap; }
.jobinfo div + div { border-top: 1px solid #000; }
.matrix { margin: 0 2px 1px 3px; padding: 2px; border: 1px solid #000; }
.matrix button {
  display: block; width: 100%; height: 21px; padding-left: 2px; text-align: left;
  font-size: 15px; line-height: 16px; background: var(--teal);
  border: 2px solid; border-color: var(--teal-hi) #4fa09a #4fa09a var(--teal-hi);
}
.layers-wrap { flex: 1; border-top: 2px solid var(--green-lo); border-left: 1px solid var(--green-lo); border-right: 2px solid var(--green-hi); border-bottom: 2px solid var(--green-hi); }
.layers {
  width: 126px;
  padding: 2px 2px 9px 2px;
  display: flex; flex-direction: column; gap: 3px;
  border: 1px solid #000; border-left: 4px solid var(--green-lo);
  box-shadow: 2px 2px var(--green-hi);
}
.group { width: 117px; padding: 2px; display: flex; flex-direction: column; gap: 2px; background: #000; }
.row { display: flex; gap: 2px; height: 14px; position: relative; }
.row input { appearance: none; width: 14px; height: 14px; flex: none; background: #fff; border: 2px solid #fff; box-shadow: inset 0 0 0 2px #000; }
.row input:checked { border-color: #0000a8; }
.row i { width: 14px; flex: none; }
.row span { flex: 1; min-width: 0; padding-left: 1px; overflow: hidden; white-space: nowrap; font: bold 12px/15px var(--mono); background: var(--teal); }
.mark { position: absolute; right: 2px; top: 5px; width: 5px; height: 5px; }
.green { background: #439800; }
.red { background: #f00; }
.white span { background: #fff; }
.mask span { background: #04a57c; color: #033a2b; }
.signal span { background: var(--orange); }
.drill span { background: #9bb3bf; }
.rout span { background: #dadada; }
.selected { padding: 2px 2px 1px 3px; }
.selected div { border: 1px solid #000; padding-left: 2px; background: var(--orange); font: bold 12px/18px var(--mono); }

.canvas { flex: 1; min-width: 0; position: relative; overflow: hidden; background: #000; }
.pop { position: absolute; border: 1px solid #a9adb0; border-radius: 7px; padding: 0 5px 5px; background: linear-gradient(#55585b 0, #2c2e31 95px, #141618 96px, #101214 100%); }
.pop1 { left: 39px; top: 34px; width: 398px; }
.pop2 { left: 1141px; top: 358px; width: 342px; background: linear-gradient(#55585b 0, #8b8e91 60px, #d0d2d4 95px, #202224 96px, #101214 100%); }
.pop header { height: 26px; display: flex; align-items: center; gap: 5px; margin: 0 -5px; padding: 0 0 2px 6px; font: 13px/20px var(--sans); border-radius: 6px 6px 0 0; background: radial-gradient(ellipse 60px 26px at 60px 13px, #8b8b8b, transparent), linear-gradient(90deg, #4c4c4c, #000 48%, #14171b 55%, #0a0a0a 70%, #444648); }
.pop2 header { background: radial-gradient(ellipse 70px 26px at 60px 13px, #b0b0b0, transparent), linear-gradient(90deg, #77797c, #55585c 30%, #05070c 50%, #0c1016 62%, #66686c 85%, #77797c); }
.popx { align-self: flex-start; margin-left: auto; margin-right: 4px; width: 49px; height: 19px; display: grid; place-items: center; border: 1px solid #9a9da0; border-top: 0; border-radius: 0 0 5px 5px; }
.popx svg { width: 9px; height: 9px; }
.pop2 .popx { background: linear-gradient(#d79a90, #b8402c 48%, #a3230f 50%, #d4553a); border-color: #d8a9a2; }
.client { display: grid; grid-template-columns: 1fr 34px; border: 1px solid #c5c9cb; background: #000; padding: 1px 1px 1px 1px; gap: 1px 2px; }
.view { border: 3px solid; border-color: var(--green-lo) var(--green-hi) var(--green-hi) var(--green-lo); overflow: hidden; }
.view svg { width: 100%; height: 241px; }
.poptools { display: flex; flex-direction: column; gap: 2px; padding-top: 2px; }
.poptools button { width: 33px; height: 33px; display: grid; place-items: center; background: #9fd6d6; border: 2px solid #60c4ab; box-shadow: inset 2px 2px #c2fff8, inset -2px -2px #4c8686; }
.poptools svg { width: 21px; height: 21px; }
.popclose { grid-column: 1 / -1; }
.popclose button { display: block; width: 100%; height: 27px; border: 2px solid #60c4ab; background: var(--teal); box-shadow: inset 2px 2px #c2fff8, inset -2px -2px #4c8686; font: bold 15px/22px var(--mono); }

.right { width: 164px; display: flex; flex-direction: column; border-left: 2px solid var(--green-lo); background: #000; margin-bottom: 2px; }
.tools { display: grid; grid-template-columns: repeat(4, 39px); gap: 1px; padding: 1px 0; border-top: 1px solid var(--green-lo); border-bottom: 2px solid var(--teal); border-right: 2px solid var(--green-lo); }
.tools.edit { padding-top: 1px; border-top: 0; border-bottom-color: #777; }
.tools button { width: 39px; height: 39px; display: grid; place-items: center; background: var(--teal); border: 3px solid; border-color: #c8f3f2 #588585 #588585 #c8f3f2; }
.tools svg { width: 30px; height: 30px; }
.tools.edit button { background: #d0d0d0; border-color: #eee #777 #777 #eee; }
.tools.edit .plain { background: #fff; border-color: #fff #999 #999 #fff; }
.tools.edit .pick { background: var(--orange); border-color: #ffe6ac #8a6a28 #8a6a28 #ffe6ac; }
.tools .alert { border-color: #c82020 #8a1010 #8a1010 #c82020; }
.overview { flex: 1; border: 2px solid var(--green-hi); border-top-color: var(--green-lo); border-left: 0; display: flex; flex-direction: column; justify-content: center; margin-top: 1px; padding-bottom: 1px; }
.coords { display: flex; flex-direction: column; height: 44px; padding: 7px 2px 0; background: var(--green); border: 2px solid; border-color: var(--green-lo) var(--green-hi) var(--green-hi) var(--green); border-left: 0; font: bold 15px/15px var(--mono); white-space: nowrap; }

.status { flex: none; height: 33px; display: flex; padding-bottom: 1px; background: #000; font: bold 12px/30px var(--mono); }
.mode { width: 31px; margin: 0 1px 0 1px; display: grid; place-items: center; background: var(--cream); border: 2px solid #fffff0; box-shadow: inset -2px -2px #c9c99e; }
.mode + .mode { margin-left: 0; }
.mode svg { width: 20px; height: 20px; }
.mode.on { width: 29px; border: 4px solid #58c0a4; }
.xy { width: 48px; padding: 2px 0 0 3px; background: var(--cream); }
.xyfield { position: relative; width: 172px; display: flex; padding: 1px; border-left: 1px solid #58c0a4; background: var(--cream); }
.xyfield input { width: 100%; border: 2px solid; border-color: #9c9c80 #d3d3a9 #d3d3a9 #9c9c80; background: var(--cream); padding: 0 8px; box-shadow: 0 0 0 1px #ffffea; }
.caret { position: absolute; left: 6px; top: 5px; width: 6px; height: 16px; }
.mode.bang { margin: 0 2px; width: 30px; }
.message { flex: 1; padding: 2px 0 0 3px; background: var(--cream); white-space: nowrap; }
.unit { position: relative; width: 79px; margin: 0 1px 0 2px; padding: 3px 2px 1px 6px; background: var(--green); }
.unit select { display: block; appearance: none; width: 100%; height: 28px; padding-left: 5px; font: bold 15px/20px var(--mono); border: 2px solid; border-color: var(--green-hi) var(--green-lo) var(--green-lo) var(--green-hi); }
.unit i { position: absolute; right: 9px; top: 14px; width: 12px; height: 6px; border: 1px solid; border-color: var(--green-hi) var(--green-lo) var(--green-lo) var(--green-hi); }
.strip { flex: none; height: 40px; padding: 3px 2px 10px; background: linear-gradient(#6e8a8a 0 3px, var(--cream) 3px); }
.strip div { height: 27px; border: 1px solid #000; background: #b4ffff; box-shadow: inset 0 2px #d8ffff, inset 0 -2px #d8ffff, inset 3px 0 #d8ffff, inset -2px -4px #5f9c9c; }

.taskbar {
  flex: none; height: 40px; display: flex; gap: 4px; padding: 0 2px 0 8px; border-top: 1px solid #8fa3b8;
  background: linear-gradient(100deg, #14304f 0, #163a64 40%, #1a3f70 52%, #0a2c5c 62%, #123566 70%, #06285c 78%, #0c2c58 90%, #14294a 100%);
}
.taskbar > button { width: 58px; height: 38px; display: grid; place-items: center; border: 1px solid #8c9db4; border-radius: 3px; background: linear-gradient(160deg, #7285a0 0, #3c5477 40%, #233f68 70%, #35527c 100%); }
.taskbar > button svg { width: 34px; height: 32px; }
.taskbar > .start { width: 38px; border: 0; background: none; margin-right: 10px; }
.taskbar > .start svg { width: 38px; height: 38px; }
.taskbar > .stack { width: 54px; margin-right: 4px; box-shadow: 3px 0 0 -1px #4a6282, 4px 0 0 -1px #8c9db4; }
.taskbar > .active { width: 51px; margin-right: 7px; background: linear-gradient(160deg, #cfd6e0, #8c9ab0 50%, #9ba9bd); border-color: #e0e6ee; box-shadow: 3px 0 0 -1px #6b7f9a, 4px 0 0 -1px #c0cbd8; }
.tray { margin-left: auto; display: flex; align-items: center; gap: 6px; color: #fff; font: 13px/18px var(--sans); }
.clock { width: 66px; margin-left: 4px; display: flex; flex-direction: column; align-items: center; }
.desktop { width: 14px; height: 38px; border: 1px solid #7c8ba0; background: linear-gradient(160deg, #4c5d78, #1a2c48); }
```
